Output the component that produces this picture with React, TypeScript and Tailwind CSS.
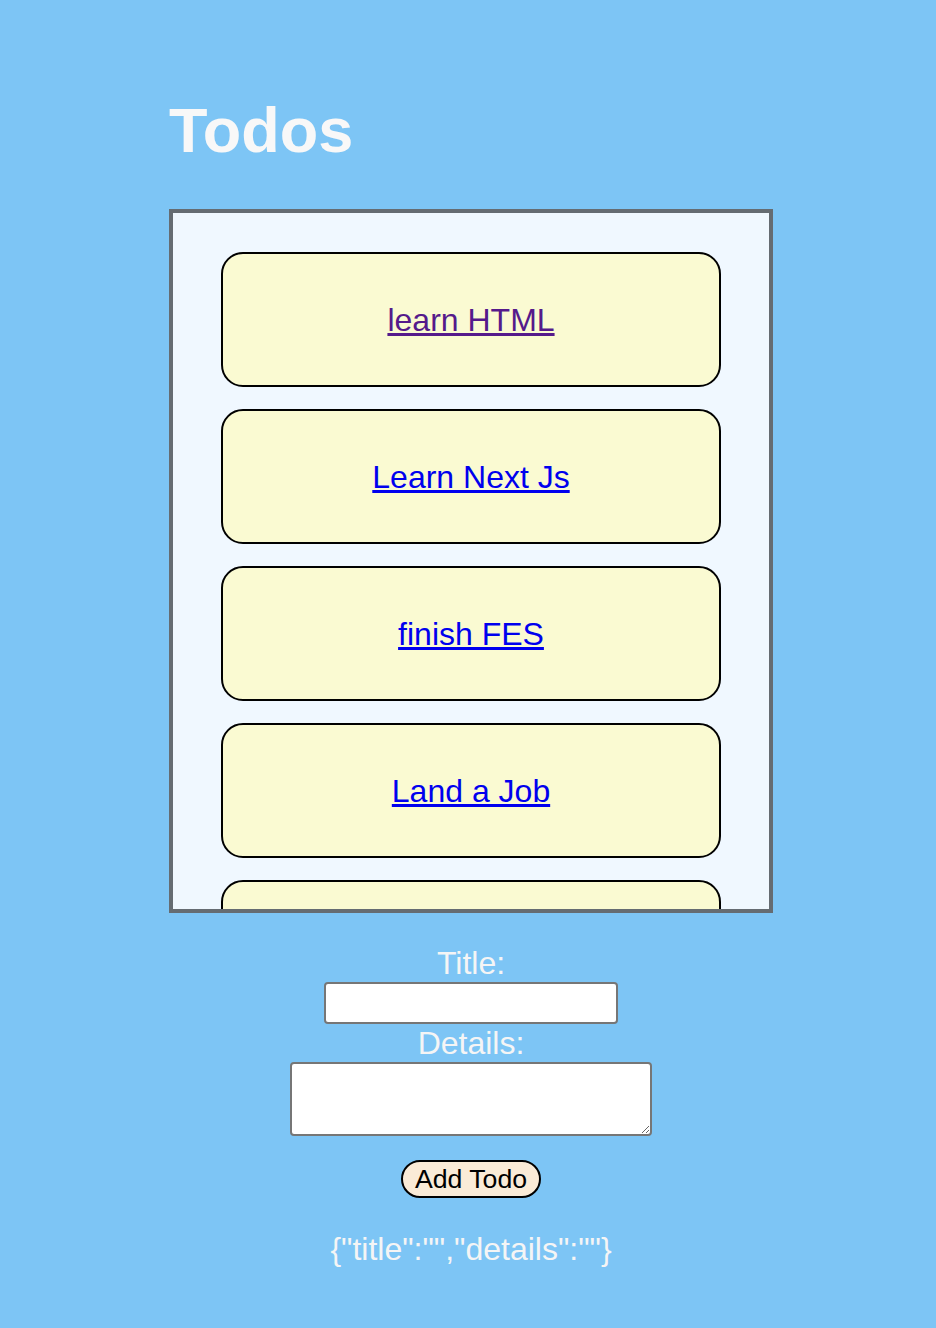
import { useState } from 'react'

type Todo = { id: number; title: string; visited?: boolean }

const todos: Todo[] = [
  { id: 1, title: 'learn HTML', visited: true },
  { id: 2, title: 'Learn Next Js' },
  { id: 3, title: 'finish FES' },
  { id: 4, title: 'Land a Job' },
  // fifth item is scrolled out of view, only its top edge shows
  { id: 5, title: '' }
]

const App = () => {
  const [form, setForm] = useState({ title: '', details: '' })

  return (
    <div className="min-h-[1328px] bg-[#7dc5f5] font-['Liberation_Sans',Arial,sans-serif]">
      <div className="ml-[169px] flex w-[604px] flex-col pt-[93px]">
        <h1 className="text-[63px] leading-[74px] font-bold text-[#f8f8f8]">
          Todos
        </h1>

        <div className="mt-[42px] h-[704px] overflow-hidden border-4 border-[#656c72] bg-[#f0f8ff]">
          <ul className="flex flex-col items-center gap-[22px] pt-[39px]">
            {todos.map((todo) => (
              <li
                key={todo.id}
                className="flex h-[135px] w-[500px] shrink-0 items-center justify-center rounded-[22px] border-2 border-black bg-[#fafad2]"
              >
                {todo.title && (
                  <a
                    href="#"
                    className={
                      todo.visited
                        ? 'text-[32px] text-[#551a8b] underline'
                        : 'text-[32px] text-[#0000ee] underline'
                    }
                  >
                    {todo.title}
                  </a>
                )}
              </li>
            ))}
          </ul>
        </div>

        <form
          className="mt-[31px] flex flex-col items-center"
          onSubmit={(e) => e.preventDefault()}
        >
          <label
            htmlFor="title"
            className="block text-[32px] leading-[38px] text-[#f5f5f5]"
          >
            Title:
          </label>
          <input
            id="title"
            value={form.title}
            onChange={(e) => setForm({ ...form, title: e.target.value })}
            className="h-[42px] w-[294px] rounded-[4px] border-2 border-[#767676] bg-white px-1 text-[26px] outline-none"
          />
          <label
            htmlFor="details"
            className="block text-[32px] leading-[38px] text-[#f5f5f5]"
          >
            Details:
          </label>
          <textarea
            id="details"
            value={form.details}
            onChange={(e) => setForm({ ...form, details: e.target.value })}
            className="h-[74px] w-[362px] rounded-[4px] border-2 border-[#767676] bg-white px-1 text-[26px] outline-none"
          />
          <button
            type="submit"
            className="mt-[24px] h-[38px] w-[140px] rounded-full border-2 border-black bg-[#faebd7] text-[26.67px] leading-none text-black"
          >
            Add Todo
          </button>
          <p className="mt-[32px] text-[32px] leading-[38px] text-[#f5f5f5]">
            {JSON.stringify(form)}
          </p>
        </form>
      </div>
    </div>
  )
}

export default App
